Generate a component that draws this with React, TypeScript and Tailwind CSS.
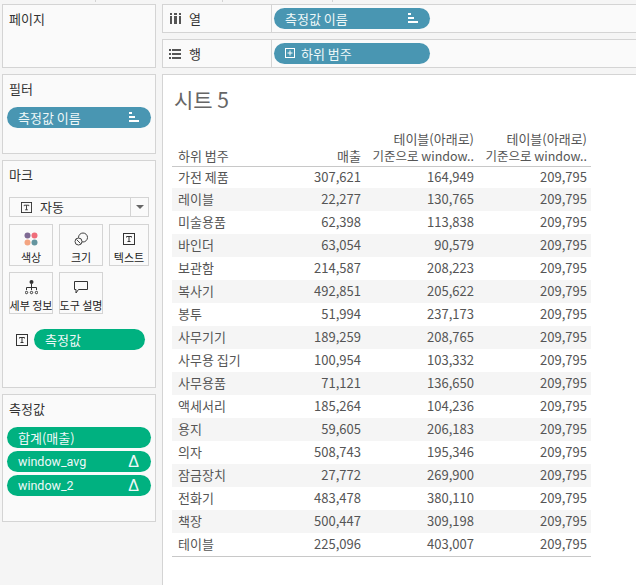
const rows = [
  ['가전 제품', '307,621', '164,949'],
  ['레이블', '22,277', '130,765'],
  ['미술용품', '62,398', '113,838'],
  ['바인더', '63,054', '90,579'],
  ['보관함', '214,587', '208,223'],
  ['복사기', '492,851', '205,622'],
  ['봉투', '51,994', '237,173'],
  ['사무기기', '189,259', '208,765'],
  ['사무용 집기', '100,954', '103,332'],
  ['사무용품', '71,121', '136,650'],
  ['액세서리', '185,264', '104,236'],
  ['용지', '59,605', '206,183'],
  ['의자', '508,743', '195,346'],
  ['잠금장치', '27,772', '269,900'],
  ['전화기', '483,478', '380,110'],
  ['책장', '500,447', '309,198'],
  ['테이블', '225,096', '403,007'],
]

const panelCls = 'border border-[#d4d4d4] bg-[#fafafa]'
const labelCls = 'text-[13px] leading-[19px] text-[#333]'
const pillCls = 'flex h-[21px] items-center justify-between rounded-full pb-px pl-[11px] pr-[12px] text-[13px] leading-[19px] text-[#eef8f8]'
const colsCls = 'grid-cols-[96px_97px_113px_113px]'

function SortIcon() {
  return (
    <svg width="10" height="10" viewBox="0 0 10 10" fill="#fff">
      <rect x="0" y="0" width="3" height="2" />
      <rect x="0" y="4" width="6" height="2" />
      <rect x="0" y="8" width="10" height="2" />
    </svg>
  )
}

function TextIcon({ size = 12 }: { size?: number }) {
  return (
    <svg width={size} height={size} viewBox="0 0 12 12" fill="none" stroke="#333" strokeWidth="1">
      <rect x="0.5" y="0.5" width="11" height="11" />
      <path d="M3.5 4.5V3.5H8.5V4.5M6 3.5V8.5M4.5 8.5H7.5" />
    </svg>
  )
}

function ColorIcon() {
  return (
    <svg width="14" height="14" viewBox="0 0 14 14">
      <circle cx="3.5" cy="3.5" r="3" fill="#7f6a93" />
      <circle cx="10.5" cy="3.5" r="3" fill="#ef6d7a" />
      <circle cx="3.5" cy="10.5" r="3" fill="#f4a582" />
      <circle cx="10.5" cy="10.5" r="3" fill="#64959f" />
    </svg>
  )
}

function SizeIcon() {
  return (
    <svg width="14" height="14" viewBox="0 0 14 14" fill="none" stroke="#444" strokeWidth="1">
      <circle cx="9" cy="5.5" r="4.5" />
      <circle cx="4.5" cy="9.5" r="3.5" fill="#fafafa" />
      <path d="M2.5 7.5L6.5 11.5" />
    </svg>
  )
}

function DetailIcon() {
  return (
    <svg width="13" height="15" viewBox="0 0 13 15" fill="none" stroke="#333" strokeWidth="1">
      <circle cx="6.5" cy="2" r="2" fill="#333" stroke="none" />
      <path d="M6.5 4V10M1.5 10V7.5H11.5V10" />
      <circle cx="1.5" cy="12.5" r="1.2" />
      <circle cx="6.5" cy="12.5" r="1.2" />
      <circle cx="11.5" cy="12.5" r="1.2" />
    </svg>
  )
}

function TooltipIcon() {
  return (
    <svg width="14" height="13" viewBox="0 0 14 13" fill="none" stroke="#333" strokeWidth="1">
      <path d="M0.5 0.5H13.5V8.5H4.5L2 12V8.5H0.5Z" />
    </svg>
  )
}

function ColumnsIcon() {
  return (
    <svg width="11" height="11" viewBox="0 0 11 11" fill="#555">
      <rect x="0" y="0" width="2" height="2" />
      <rect x="4" y="0" width="3" height="2" />
      <rect x="9" y="0" width="2" height="2" />
      <rect x="0" y="3" width="2" height="8" />
      <rect x="4" y="3" width="3" height="8" />
      <rect x="9" y="3" width="2" height="8" />
    </svg>
  )
}

function RowsIcon() {
  return (
    <svg width="12" height="10" viewBox="0 0 12 10" fill="#555">
      <rect x="0" y="0" width="2" height="2" />
      <rect x="3" y="0" width="9" height="2" />
      <rect x="0" y="4" width="2" height="2" />
      <rect x="3" y="4" width="9" height="2" />
      <rect x="0" y="8" width="2" height="2" />
      <rect x="3" y="8" width="9" height="2" />
    </svg>
  )
}

function MarkCard({ label, icon }: { label: string; icon: React.ReactNode }) {
  return (
    <div className="flex h-[42px] flex-col items-center border border-[#d4d4d4] pt-[6px]">
      <div className="flex h-4 items-center">{icon}</div>
      <span className="mt-[3px] text-[11px] leading-[15px] whitespace-nowrap text-[#222]">{label}</span>
    </div>
  )
}

function ShelfRow({ label, icon, children }: { label: string; icon: React.ReactNode; children: React.ReactNode }) {
  return (
    <div className={`${panelCls} -mr-1 flex h-[29px] items-center`}>
      <div className="flex h-full w-[109px] items-center gap-2 border-r border-[#d4d4d4] pl-[6px] text-[13px] text-[#333]">
        <span className="flex w-3 justify-center">{icon}</span>
        <span>{label}</span>
      </div>
      <div className="ml-[2px] w-[156px]">{children}</div>
    </div>
  )
}

function WindowHeader() {
  return (
    <div className="pr-1 text-right whitespace-nowrap">
      <div className="h-[17px]">테이블(아래로)</div>
      <div className="h-[17px] text-[12.5px]">기준으로 window..</div>
    </div>
  )
}

export default function App() {
  return (
    <div className="flex h-[585px] w-[636px] flex-col overflow-hidden bg-[#f5f5f5] font-['Noto_Sans_CJK_KR','Noto_Sans',sans-serif]">
      <div className="flex h-1 shrink-0 items-start">
        <span className="ml-[95px] h-[2px] w-px bg-[#d4d4d4]" />
        <span className="ml-[126px] h-[2px] w-px bg-[#d4d4d4]" />
        <span className="ml-[109px] h-[2px] w-px bg-[#d4d4d4]" />
      </div>
      <div className="flex min-h-0 flex-1 gap-[6px] pl-[2px]">
        <div className="flex w-[154px] shrink-0 flex-col gap-[6px]">
          <div className={`${panelCls} ${labelCls} h-[64px] px-[6px] pt-1`}>페이지</div>

          <div className={`${panelCls} h-[80px] px-1 pt-1`}>
            <div className={`${labelCls} pl-[2px]`}>필터</div>
            <div className={`${pillCls} mt-[9px] bg-[#4996b2]`}>
              <span>측정값 이름</span>
              <SortIcon />
            </div>
          </div>

          <div className={`${panelCls} h-[228px] px-[6px] pt-1`}>
            <div className={labelCls}>마크</div>
            <div className="mt-[13px] flex h-[20px] w-[140px] items-center border border-[#d4d4d4] bg-[#fafafa]">
              <div className="flex flex-1 items-center gap-2 pl-[11px] text-[13px] text-[#333]">
                <TextIcon size={11} />
                <span className="pb-px">자동</span>
              </div>
              <div className="flex h-full w-[18px] items-center justify-center border-l border-[#d4d4d4]">
                <span className="h-0 w-0 border-x-[4px] border-t-[4px] border-x-transparent border-t-[#666]" />
              </div>
            </div>
            <div className="mt-[7px] grid w-[140px] grid-cols-[44px_44px_40px] gap-[6px]">
              <MarkCard label="색상" icon={<ColorIcon />} />
              <MarkCard label="크기" icon={<SizeIcon />} />
              <MarkCard label="텍스트" icon={<TextIcon />} />
              <MarkCard label="세부 정보" icon={<DetailIcon />} />
              <MarkCard label="도구 설명" icon={<TooltipIcon />} />
            </div>
            <div className="mt-[15px] flex items-center gap-[6px] pl-[7px]">
              <TextIcon />
              <div className={`${pillCls} w-[111px] bg-[#00b180]`}>
                <span>측정값</span>
              </div>
            </div>
          </div>

          <div className={`${panelCls} h-[128px] px-1 pt-1`}>
            <div className={`${labelCls} pl-[2px]`}>측정값</div>
            <div className="mt-[9px] flex flex-col gap-[3px]">
              <div className={`${pillCls} bg-[#00b180]`}>
                <span>합계(매출)</span>
              </div>
              <div className={`${pillCls} bg-[#00b180]`}>
                <span className="font-['Roboto'] text-[12.5px]">window_avg</span>
                <span className="font-['Liberation_Sans'] text-[16px]">Δ</span>
              </div>
              <div className={`${pillCls} bg-[#00b180]`}>
                <span className="font-['Roboto'] text-[12.5px]">window_2</span>
                <span className="font-['Liberation_Sans'] text-[16px]">Δ</span>
              </div>
            </div>
          </div>
        </div>

        <div className="flex min-w-0 flex-1 flex-col gap-[6px]">
          <ShelfRow label="열" icon={<ColumnsIcon />}>
            <div className={`${pillCls} bg-[#4996b2]`}>
              <span>측정값 이름</span>
              <SortIcon />
            </div>
          </ShelfRow>
          <ShelfRow label="행" icon={<RowsIcon />}>
            <div className={`${pillCls} justify-start gap-[6px] bg-[#4996b2]`}>
              <svg width="10" height="10" viewBox="0 0 10 10" fill="none" stroke="#fff" strokeWidth="1">
                <rect x="0.5" y="0.5" width="9" height="9" />
                <path d="M5 2.5V7.5M2.5 5H7.5" />
              </svg>
              <span>하위 범주</span>
            </div>
          </ShelfRow>

          <div className="-mr-1 flex-1 border-t border-l border-[#d4d4d4] bg-white pt-2 pl-[9px]">
            <div className="pl-[2px] text-[21px] leading-[32px] text-[#666]">시트 5</div>
            <div className="mt-[15px] w-[419px] text-[13px] text-[#555]">
              <div className={`grid ${colsCls} items-end border-b border-[#c8c8c8] pb-[2px] leading-[17px]`}>
                <span className="pl-[6px]">하위 범주</span>
                <span className="pr-1 text-right">매출</span>
                <WindowHeader />
                <WindowHeader />
              </div>
              {rows.map((r, i) => (
                <div
                  key={r[0]}
                  className={`grid ${colsCls} items-center pb-px ${i === 0 ? 'h-[21px]' : 'h-[23px]'} ${i % 2 === 1 ? 'bg-[#f5f5f5]' : ''}`}
                >
                  <span className="pl-[6px]">{r[0]}</span>
                  <span className="pr-1 text-right">{r[1]}</span>
                  <span className="pr-1 text-right">{r[2]}</span>
                  <span className="pr-1 text-right">209,795</span>
                </div>
              ))}
              <div className="border-b border-[#c8c8c8]" />
            </div>
          </div>
        </div>
      </div>
    </div>
  )
}
